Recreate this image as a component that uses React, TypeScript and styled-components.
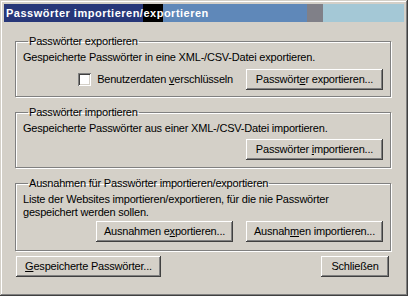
import styled, { createGlobalStyle } from 'styled-components';

const GlobalStyle = createGlobalStyle`
  html, body {
    margin: 0;
    padding: 0;
    background: #d4d0c8;
  }
  body {
    font-family: 'Liberation Sans', Arial, sans-serif;
    font-size: 11px;
    letter-spacing: -0.2px;
    color: #000000;
  }
`;

const FACE = '#d4d0c8';

export default function App() {
  return (
    <>
      <GlobalStyle />
      <Window>
        <TitleBar>Passwörter importieren/exportieren</TitleBar>
        <Body>
          <Groups>
            <Group>
              <Legend>Passwörter exportieren</Legend>
              <Desc>Gespeicherte Passwörter in eine XML-/CSV-Datei exportieren.</Desc>
              <ButtonRow $top={5}>
                <CheckLabel>
                  <CheckBox />
                  <span>
                    Benutzerdaten <u>v</u>erschlüsseln
                  </span>
                </CheckLabel>
                <Button $width={137}>
                  Passwört<u>e</u>r exportieren...
                </Button>
              </ButtonRow>
            </Group>

            <Group>
              <Legend>Passwörter importieren</Legend>
              <Desc>Gespeicherte Passwörter aus einer XML-/CSV-Datei importieren.</Desc>
              <ButtonRow $top={4} $bottom={7}>
                <Button $width={137}>
                  Passwörter <u>i</u>mportieren...
                </Button>
              </ButtonRow>
            </Group>

            <Group>
              <Legend>Ausnahmen für Passwörter importieren/exportieren</Legend>
              <Desc>
                Liste der Websites importieren/exportieren, für die nie Passwörter
                <br />
                gespeichert werden sollen.
              </Desc>
              <ButtonRow $top={2} $bottom={8}>
                <Button $width={137}>
                  Ausnahmen e<u>x</u>portieren...
                </Button>
                <Button $width={137}>
                  Ausnah<u>m</u>en importieren...
                </Button>
              </ButtonRow>
            </Group>
          </Groups>

          <Footer>
            <Button $width={145}>
              <u>G</u>espeicherte Passwörter...
            </Button>
            <Button $width={68}>Schließen</Button>
          </Footer>
        </Body>
      </Window>
    </>
  );
}

const Window = styled.div`
  width: 408px;
  height: 296px;
  box-sizing: border-box;
  padding: 4px;
  background: ${FACE};
  box-shadow:
    inset -1px -1px #404040,
    inset 1px 1px ${FACE},
    inset -2px -2px #808080,
    inset 2px 2px #ffffff;
  display: flex;
  flex-direction: column;
`;

const TitleBar = styled.div`
  height: 18px;
  line-height: 18px;
  padding-left: 2px;
  color: #ffffff;
  font-weight: bold;
  font-size: 11px;
  letter-spacing: 0.5px;
  white-space: nowrap;
  background: linear-gradient(
    90deg,
    #273779 0px,
    #273779 139px,
    #000000 139px,
    #000000 159px,
    #5f88b9 159px,
    #5f88b9 303px,
    #808088 303px,
    #808088 319px,
    #a4c8d6 319px,
    #a4c8d6 100%
  );
`;

const Body = styled.div`
  padding: 13px 13px 0 11px;
  display: flex;
  flex-direction: column;
`;

const Groups = styled.div`
  display: flex;
  flex-direction: column;
  gap: 9px;
`;

const Group = styled.fieldset`
  margin: 0;
  padding: 0 7px;
  border: 1px solid #808080;
  box-shadow:
    inset 1px 1px #ffffff,
    1px 1px #ffffff;
  min-width: 0;
  display: flex;
  flex-direction: column;
`;

const Legend = styled.legend`
  padding: 0 1px;
  margin-left: 5px;
  line-height: 13px;
  font-size: 11px;
`;

const Desc = styled.div`
  margin-top: 3px;
  line-height: 13px;
  white-space: nowrap;
`;

const ButtonRow = styled.div<{ $top: number; $bottom?: number }>`
  margin-top: ${(p) => p.$top}px;
  margin-bottom: ${(p) => p.$bottom ?? 6}px;
  display: flex;
  justify-content: flex-end;
  align-items: center;
  gap: 13px;
`;

const CheckLabel = styled.label`
  display: flex;
  align-items: center;
  gap: 6px;
  line-height: 13px;
`;

const CheckBox = styled.span`
  width: 13px;
  height: 13px;
  box-sizing: border-box;
  background: #ffffff;
  box-shadow:
    inset 1px 1px #808080,
    inset -1px -1px #ffffff,
    inset 2px 2px #404040,
    inset -2px -2px ${FACE};
`;

const Button = styled.button<{ $width: number }>`
  width: ${(p) => p.$width}px;
  height: 21px;
  margin: 0;
  padding: 0 0 1px 0;
  border: none;
  background: ${FACE};
  font-family: 'Liberation Sans', Arial, sans-serif;
  font-size: 11px;
  letter-spacing: -0.2px;
  color: #000000;
  white-space: nowrap;
  box-shadow:
    inset -1px -1px #404040,
    inset 1px 1px #ffffff,
    inset -2px -2px #808080,
    inset 2px 2px ${FACE};
  u {
    text-decoration: underline;
    text-underline-offset: 1px;
  }
`;

const Footer = styled.div`
  margin-top: 5px;
  padding-left: 1px;
  padding-right: 2px;
  display: flex;
  justify-content: space-between;
`;
